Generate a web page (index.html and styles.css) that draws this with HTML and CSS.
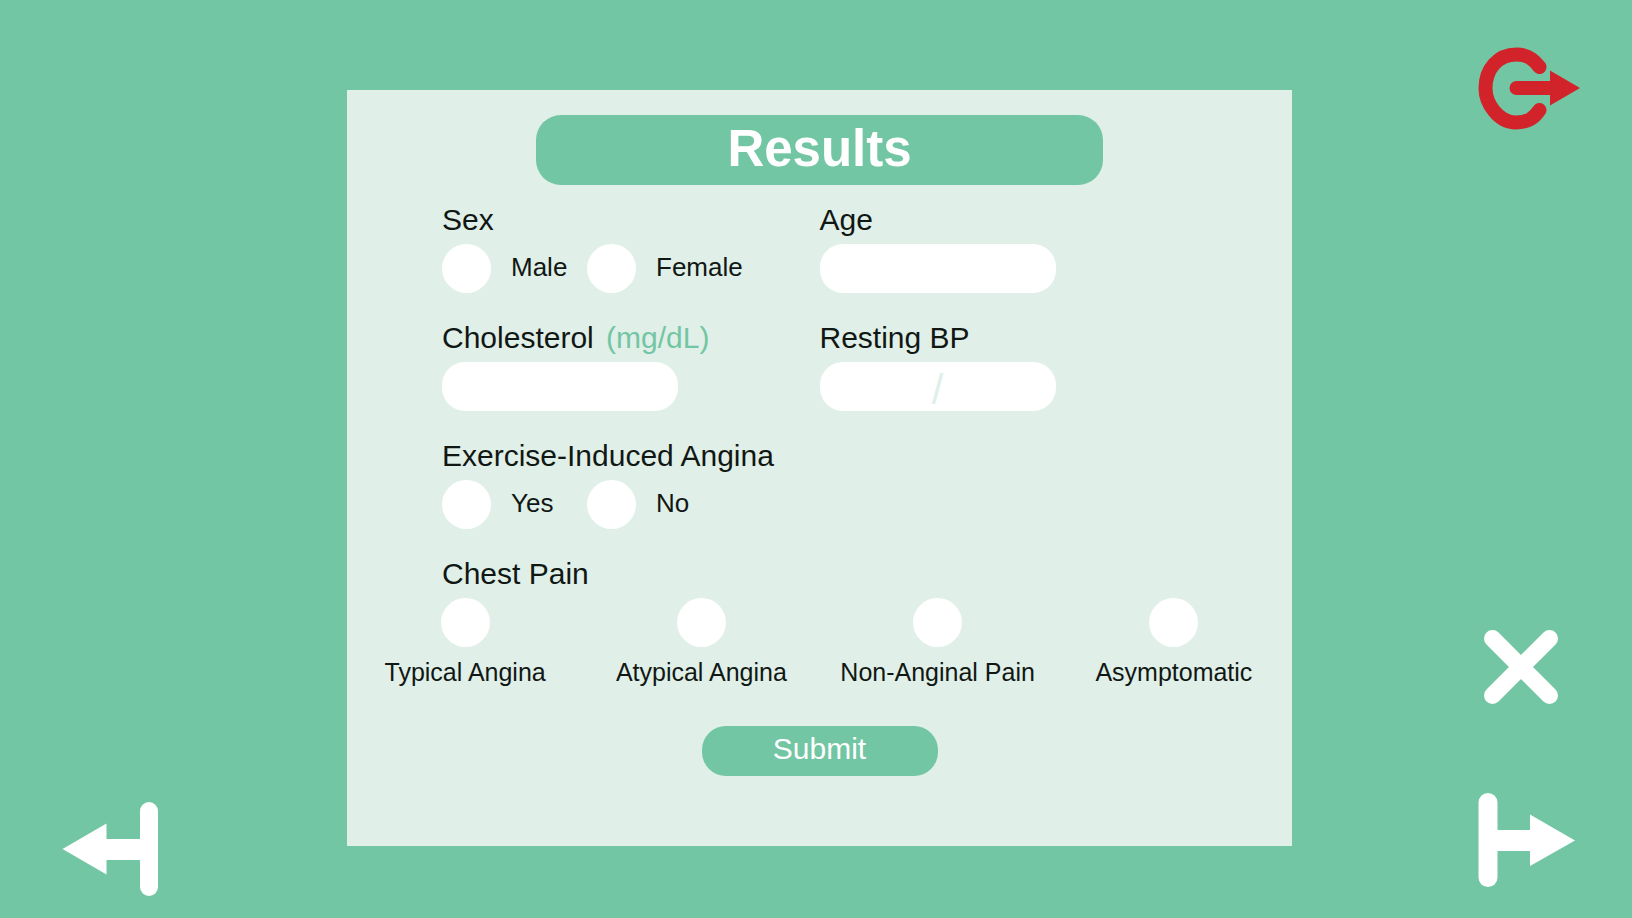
FILE: index.html
```html
<!DOCTYPE html>
<html lang="en">
<head>
<meta charset="utf-8">
<meta name="viewport" content="width=device-width, initial-scale=1">
<title>Results</title>
<link rel="stylesheet" href="styles.css">
</head>
<body>
<div class="page">
  <nav class="side side-left" aria-label="Previous">
    <button class="icon-button" type="button" aria-label="Back">
      <svg width="96" height="94" viewBox="0 0 96 94" fill="#fff" aria-hidden="true">
        <rect x="78" y="0" width="18" height="94" rx="9"/>
        <path d="M0.500 47 L44.500 21.500 V37 H80 V58 H44.500 V72.500 Z"/>
      </svg>
    </button>
  </nav>

  <main class="card">
    <h1 class="title">Results</h1>
    <form class="form">
      <div class="fields">
        <div class="field" role="radiogroup" aria-labelledby="sex-label">
          <span class="label" id="sex-label">Sex</span>
          <div class="options">
            <label class="option"><input class="radio" type="radio" name="sex" value="male"><span class="option-text">Male</span></label>
            <label class="option"><input class="radio" type="radio" name="sex" value="female"><span class="option-text">Female</span></label>
          </div>
        </div>
        <div class="field">
          <label class="label" for="age">Age</label>
          <input class="input" id="age" type="text" inputmode="numeric">
        </div>
        <div class="field">
          <label class="label" for="cholesterol">Cholesterol <span class="unit">(mg/dL)</span></label>
          <input class="input" id="cholesterol" type="text" inputmode="numeric">
        </div>
        <div class="field">
          <label class="label" for="bp">Resting BP</label>
          <input class="input input-bp" id="bp" type="text" placeholder="/">
        </div>
        <div class="field field-wide" role="radiogroup" aria-labelledby="exercise-label">
          <span class="label" id="exercise-label">Exercise-Induced Angina</span>
          <div class="options">
            <label class="option"><input class="radio" type="radio" name="exercise" value="yes"><span class="option-text">Yes</span></label>
            <label class="option"><input class="radio" type="radio" name="exercise" value="no"><span class="option-text">No</span></label>
          </div>
        </div>
      </div>

      <div class="field chest" role="radiogroup" aria-labelledby="chest-label">
        <span class="label chest-label" id="chest-label">Chest Pain</span>
        <div class="chest-options">
          <label class="chest-option"><input class="radio" type="radio" name="chest" value="typical">Typical Angina</label>
          <label class="chest-option"><input class="radio" type="radio" name="chest" value="atypical">Atypical Angina</label>
          <label class="chest-option"><input class="radio" type="radio" name="chest" value="non-anginal">Non-Anginal Pain</label>
          <label class="chest-option"><input class="radio" type="radio" name="chest" value="asymptomatic">Asymptomatic</label>
        </div>
      </div>

      <button class="submit" type="submit">Submit</button>
    </form>
  </main>

  <nav class="side side-right" aria-label="Actions">
    <button class="icon-button" type="button" aria-label="Log out">
      <svg width="102" height="84" viewBox="0 0 102 84" aria-hidden="true">
        <path d="M61.500 20 C56 12.500 50 7.500 38.500 7.500 C20 7.500 7.500 22 7.500 41.500 C7.500 56 20 75.500 38 75.500 C50 75.500 56 71 61.500 63" fill="none" stroke="#d2232a" stroke-width="14" stroke-linecap="round"/>
        <path d="M38.500 34 H72 V23.500 L102 41 L72 58.500 V48 H38.500 A7 7 0 0 1 38.500 34 Z" fill="#d2232a"/>
      </svg>
    </button>
    <div class="side-group">
      <button class="icon-button" type="button" aria-label="Close">
        <svg width="86" height="74" viewBox="0 0 86 74" aria-hidden="true">
          <path d="M14.500 8.500 L71.500 65.500 M71.500 8.500 L14.500 65.500" fill="none" stroke="#fff" stroke-width="17" stroke-linecap="round"/>
        </svg>
      </button>
      <button class="icon-button" type="button" aria-label="Next">
        <svg width="97" height="94" viewBox="0 0 97 94" fill="#fff" aria-hidden="true">
          <rect x="0.500" y="0" width="19" height="94" rx="9.500"/>
          <path d="M97 47.500 L52 21.500 V37 H18 V58 H52 V73 Z"/>
        </svg>
      </button>
    </div>
  </nav>
</div>
</body>
</html>
```

FILE: styles.css
```css
*,
*::before,
*::after {
  box-sizing: border-box;
}

:root {
  --green: #72c6a3;
  --mint: #e0efe8;
  --ink: #111814;
}

body {
  margin: 0;
  background: var(--green);
  color: var(--ink);
  font-family: "Liberation Sans", Arial, Helvetica, sans-serif;
}

.page {
  display: grid;
  grid-template-columns: minmax(102px, 1fr) minmax(0, 945px) minmax(102px, 1fr);
  min-height: 100vh;
  padding: 0 52px 0 59px;
}

.side {
  display: flex;
  flex-direction: column;
}

.side-left {
  justify-content: flex-end;
  align-items: flex-start;
  padding: 0 3px 22px;
}

.side-right {
  justify-content: space-between;
  align-items: flex-end;
  padding: 47px 0 31px;
}

.side-group {
  display: flex;
  flex-direction: column;
  align-items: flex-start;
  gap: 89px;
  width: 102px;
}

.icon-button {
  display: block;
  padding: 0;
  border: 0;
  background: none;
  cursor: pointer;
}

.icon-button svg {
  display: block;
}

.card {
  margin: 90px 0 72px;
  padding: 25px 0 70px;
  background: var(--mint);
}

.title {
  width: 60%;
  margin: 0 auto 18px;
  padding: 1px 0 3px;
  border-radius: 25px;
  background: var(--green);
  color: #fff;
  font-size: 51px;
  line-height: 66px;
  text-align: center;
}

.form {
  display: flex;
  flex-direction: column;
  gap: 28px;
}

.fields {
  display: grid;
  grid-template-columns: repeat(auto-fit, minmax(300px, 1fr));
  row-gap: 28px;
  padding: 0 95px;
}

.field {
  display: flex;
  flex-direction: column;
  gap: 7px;
}

.field-wide {
  grid-column: 1 / -1;
}

.label {
  font-size: 30px;
  line-height: 34px;
}

.unit {
  margin-left: 4px;
  color: var(--green);
}

.input {
  width: 100%;
  max-width: 236px;
  height: 49px;
  padding: 0 20px;
  border: 0;
  border-radius: 23px;
  background: #fff;
  color: var(--ink);
  font: inherit;
  font-size: 26px;
}

.input-bp {
  padding-top: 6px;
  font-size: 42px;
  text-align: center;
}

.input-bp::placeholder {
  color: var(--mint);
  opacity: 1;
}

.options {
  display: grid;
  grid-template-columns: 145px auto;
  justify-content: start;
}

.option {
  display: flex;
  align-items: center;
  gap: 20px;
  font-size: 26px;
  line-height: 30px;
}

.option-text {
  padding-bottom: 4px;
}

.radio {
  flex: none;
  width: 49px;
  height: 49px;
  margin: 0;
  border-radius: 50%;
  background: #fff;
  appearance: none;
}

.radio:checked {
  background: var(--green);
  border: 8px solid #fff;
}

.chest-label {
  padding: 0 95px;
}

.chest-options {
  display: grid;
  grid-template-columns: repeat(auto-fit, minmax(200px, 1fr));
}

.chest-option {
  display: flex;
  flex-direction: column;
  align-items: center;
  gap: 11px;
  font-size: 25px;
  line-height: 28px;
}

.submit {
  align-self: center;
  width: 236px;
  margin-top: 12px;
  padding: 6px 0 10px;
  border: 0;
  border-radius: 24px;
  background: var(--green);
  color: #fff;
  font: inherit;
  font-size: 30px;
  line-height: 34px;
  cursor: pointer;
}
```
